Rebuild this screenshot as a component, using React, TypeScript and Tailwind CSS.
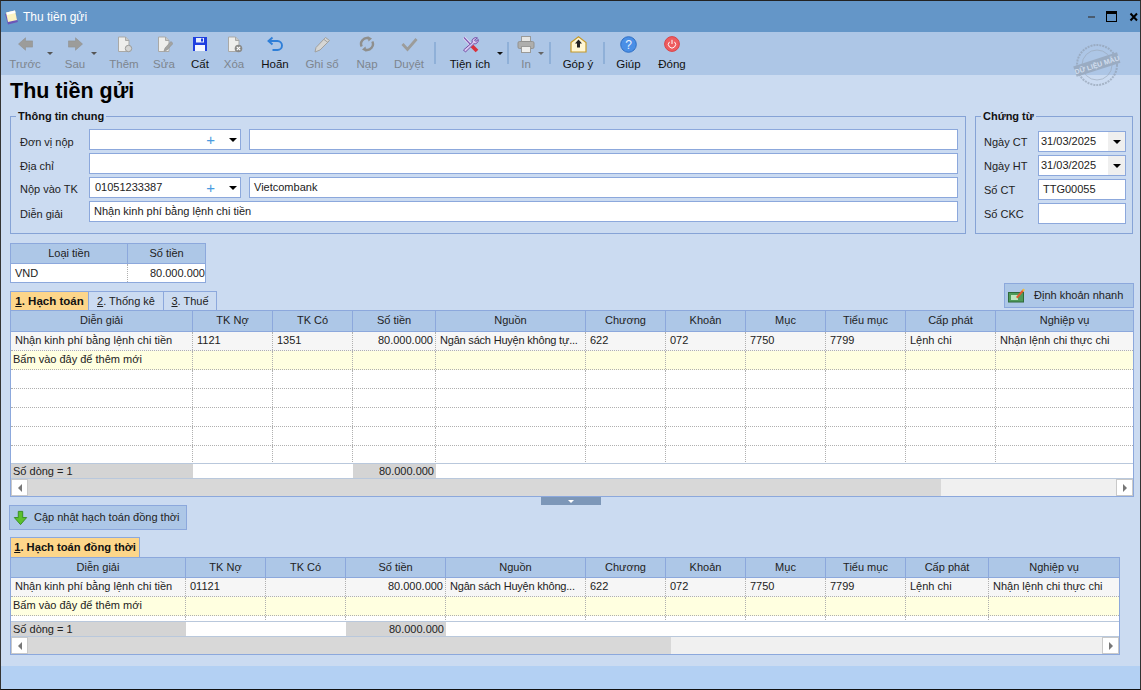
import React from "react";

const Arrow = ({ dir }: { dir: "l" | "r" }) => (
  <svg width="17" height="14" viewBox="0 0 20 18">
    <path d={dir === "l" ? "M1 9 L10 1 V5 H19 V13 H10 V17 Z" : "M19 9 L10 1 V5 H1 V13 H10 V17 Z"} fill="#9c9c9a" stroke="#8f8f8d" strokeWidth="0.7" />
  </svg>
);
const Doc = ({ children }: { children?: React.ReactNode }) => (
  <svg width="17" height="17" viewBox="0 0 17 17">
    <path d="M2.5 1 H9.5 L13 4.5 V15.5 H2.5 Z" fill="#eeeeec" stroke="#a9a9a7" />
    <path d="M9.5 1 V4.5 H13" fill="#c8c8c6" stroke="#a9a9a7" />
    {children}
  </svg>
);
const icons: Record<string, React.ReactNode> = {
  them: <Doc><circle cx="12.5" cy="12.5" r="3.2" fill="#d6d6d4" stroke="#9a9a98" /></Doc>,
  sua: <Doc><path d="M8 15 L9 12 L15 5.5 L17 7.5 L11 14 Z" fill="#a4a4a2" stroke="#8f8f8d" strokeWidth="0.6" /></Doc>,
  cat: (
    <svg width="16" height="16" viewBox="0 0 16 16">
      <path d="M1 1 H15 V15 H1 Z" fill="#1f3fe0" />
      <path d="M4 2 H12 V6.5 H4 Z" fill="#e8eefc" />
      <path d="M3 9 H13 V15 H3 Z" fill="#f4f6ff" />
      <path d="M9 2.5 H11 V5.5 H9 Z" fill="#1f3fe0" />
    </svg>
  ),
  xoa: <Doc><circle cx="12.5" cy="12.5" r="3.8" fill="#8a8a88" /><path d="M10.8 10.8 L14.2 14.2 M14.2 10.8 L10.8 14.2" stroke="#fff" strokeWidth="1.1" /></Doc>,
  hoan: (
    <svg width="16" height="16" viewBox="0 0 16 16" fill="none">
      <path d="M5.5 1.5 L1.5 5 L5.5 8.5" stroke="#2f7fd8" strokeWidth="1.9" />
      <path d="M2 5 H10.5 A4.2 4.2 0 0 1 10.5 14 H5.5" stroke="#2f7fd8" strokeWidth="1.9" />
    </svg>
  ),
  ghi: (
    <svg width="18" height="17" viewBox="0 0 18 17">
      <path d="M2 16 L3 11.5 L12.5 1.5 L16.5 4.5 L7 14 Z" fill="#d6d6d4" stroke="#a0a09e" />
      <path d="M11 3.5 L15 6.5" stroke="#a0a09e" />
    </svg>
  ),
  nap: (
    <svg width="16" height="16" viewBox="0 0 16 16" fill="none">
      <path d="M2.7 10.5 A5.8 5.8 0 0 1 9.5 2.3" stroke="#8f8f8d" strokeWidth="2.4" />
      <path d="M13.3 5.5 A5.8 5.8 0 0 1 6.5 13.7" stroke="#8f8f8d" strokeWidth="2.4" />
      <path d="M8.5 0 L13 2.5 L9.5 5.5 Z M7.5 16 L3 13.5 L6.5 10.5 Z" fill="#8f8f8d" />
    </svg>
  ),
  duyet: (
    <svg width="17" height="15" viewBox="0 0 17 15" fill="none">
      <path d="M1.5 7 L6.5 12.5 L15.5 2" stroke="#9c9c9a" strokeWidth="2.8" />
    </svg>
  ),
  tien: (
    <svg width="17" height="17" viewBox="0 0 17 17" fill="none">
      <path d="M2 1.5 L9 9" stroke="#e6ddf4" strokeWidth="3" />
      <path d="M2 1.5 L9 9" stroke="#7d55b0" strokeWidth="1.1" />
      <path d="M10 10 L15 15" stroke="#d8323c" strokeWidth="3.8" />
      <path d="M15.5 2 A3.8 3.8 0 0 0 10.2 6.5 L1.5 14 L3.5 16 L11.8 7.8 A3.8 3.8 0 0 0 16.3 3.5 L13.8 5.5 L12.5 4 Z" fill="#d9c9ef" stroke="#6b3f9e" strokeWidth="0.9" />
    </svg>
  ),
  in: (
    <svg width="18" height="17" viewBox="0 0 18 17">
      <rect x="4.5" y="0.5" width="9" height="5" fill="#e6e6e4" stroke="#9a9a98" />
      <rect x="1" y="5.5" width="16" height="7" rx="1.5" fill="#aeaeac" stroke="#929290" />
      <rect x="4.5" y="10.5" width="9" height="6" fill="#eeeeec" stroke="#9a9a98" />
    </svg>
  ),
  gop: (
    <svg width="17" height="17" viewBox="0 0 17 17">
      <path d="M1 6.5 L8.5 0.8 L16 6.5 V16 H1 Z" fill="#fff6d4" stroke="#c59a2a" strokeWidth="1.2" />
      <path d="M8.5 3.5 L12 7.5 H10 V11.5 H7 V7.5 H5 Z" fill="#222" />
    </svg>
  ),
  giup: (
    <svg width="17" height="17" viewBox="0 0 17 17">
      <circle cx="8.5" cy="8.5" r="7.8" fill="#4a8fe6" stroke="#2f6fc4" />
      <text x="8.5" y="13" textAnchor="middle" fontSize="12" fill="#e8f2ff" fontFamily="Liberation Sans, sans-serif">?</text>
    </svg>
  ),
  dong: (
    <svg width="16" height="16" viewBox="0 0 16 16" fill="none">
      <circle cx="8" cy="8" r="7.4" fill="#ee5b5f" stroke="#d84449" />
      <path d="M5.5 5.8 A3.6 3.6 0 1 0 10.5 5.8" stroke="#fff" strokeWidth="1" />
      <path d="M8 3.8 V8" stroke="#fff" strokeWidth="1" />
    </svg>
  ),
};

const Caret = ({ c = "#555" }: { c?: string }) => (
  <span className="w-0 h-0 border-x-[3px] border-x-transparent border-t-[3px] block" style={{ borderTopColor: c }} />
);

type Tool = { k: string; label: string; w: string; off?: boolean };

const ToolBtn = ({ t, caret }: { t: Tool; caret?: React.ReactNode }) => (
  <div className={`relative flex flex-col items-center shrink-0 h-[43px] pt-[2px] ${t.w}`}>
    <div className="h-[20px] flex items-center justify-center">{t.k === "l" || t.k === "r" ? <Arrow dir={t.k} /> : icons[t.k]}</div>
    <span className={`mt-[3px] text-[11.5px] leading-[15px] whitespace-nowrap ${t.off ? "text-[#7d858e]" : "text-[#111]"}`}>{t.label}</span>
    {caret}
  </div>
);
const Sep = () => <div className="w-[2px] h-[22px] mt-[10px] bg-[#8fb0d8] shrink-0" />;

const Input = ({ w, h = "h-[21px]", children }: { w: string; h?: string; children?: React.ReactNode }) => (
  <div className={`bg-white border border-[#8ca8dc] px-[4px] flex items-center text-[11px] text-[#222] shrink-0 ${w} ${h}`}>{children}</div>
);
const Combo = ({ text }: { text?: string }) => (
  <div className="w-[152px] h-[21px] bg-white border border-[#8ca8dc] flex items-center text-[11px] text-[#222] shrink-0 pl-[5px]">
    <span className="flex-1">{text}</span>
    <span className="text-[#4a9be0] text-[15px] leading-none mr-[14px] font-normal">+</span>
    <span className="mr-[3px]"><span className="block w-0 h-0 border-x-[4px] border-x-transparent border-t-[4px] border-t-black" /></span>
  </div>
);
const Label = ({ children, w }: { children: React.ReactNode; w: string }) => (
  <span className={`text-[11px] leading-[14px] text-[#222] shrink-0 ${w}`}>{children}</span>
);
const DateBox = ({ v }: { v: string }) => (
  <div className="w-[88px] h-[21px] bg-white border border-[#8ca8dc] flex items-center text-[11px] text-[#222] shrink-0 pl-[2px]">
    <span className="flex-1">{v}</span>
    <span className="w-[17px] h-full bg-[#efefef] flex items-center justify-center">
      <span className="block w-0 h-0 border-x-[4px] border-x-transparent border-t-[4px] border-t-black" />
    </span>
  </div>
);

const Group = ({ title, w, children }: { title: string; w: string; children: React.ReactNode }) => (
  <div className={`relative h-[118px] border border-[#86a3d6] shrink-0 ${w}`}>
    <span className="absolute -top-[8px] left-[5px] px-[2px] bg-[#cbdbf1] text-[11px] leading-[14px] font-bold text-[#111]">{title}</span>
    {children}
  </div>
);

const cellBase = "pl-[4px] pr-[2px] whitespace-nowrap overflow-hidden text-[11px] leading-[17px]";

const colsA = ["Diễn giải", "TK Nợ", "TK Có", "Số tiền", "Nguồn", "Chương", "Khoản", "Mục", "Tiểu mục", "Cấp phát", "Nghiệp vụ"];
const rightCol = 3;

const HeaderRow = ({ tpl, h }: { tpl: string; h: string }) => (
  <div className={`grid ${tpl} ${h} bg-[#adc7e7] border-b border-[#8ca8dc]`}>
    {colsA.map((c, i) => (
      <div key={i} className={`text-center text-[11px] leading-[19px] text-[#222] ${i < 10 ? "border-r border-[#8ca8dc]" : ""}`}>{c}</div>
    ))}
  </div>
);

const Row = ({ tpl, vals, bg, add }: { tpl: string; vals?: string[]; bg: string; add?: boolean }) => (
  <div className={`grid ${tpl} h-[19px] ${bg} border-b border-dotted border-[#b0b0b0]`}>
    {colsA.map((_, i) => (
      <div key={i} className={`${cellBase} ${i === rightCol ? "text-right" : ""} ${i === 4 ? "tracking-[-0.2px]" : ""} ${add && i === 0 ? "!pl-[2px]" : ""} text-[#222] ${i < 10 ? "border-r border-dotted border-[#b0b0b0]" : ""}`}>
        {vals?.[i] ?? ""}
      </div>
    ))}
  </div>
);

const Foot = ({ tpl }: { tpl: string }) => (
  <div className={`grid ${tpl} h-[16px] bg-white border-y border-[#b9c8dc]`}>
    <div className="bg-[#d4d4d4] text-[11px] leading-[14px] px-[2px] text-[#222] whitespace-nowrap">Số dòng = 1</div>
    <div />
    <div />
    <div className="bg-[#d4d4d4] text-[11px] leading-[14px] text-right pr-[2px] text-[#222]">80.000.000</div>
  </div>
);

const Scroll = ({ thumb }: { thumb: string }) => (
  <div className="flex h-[17px] bg-[#f0f0f0]">
    <div className="w-[17px] bg-white border border-[#c9c9c9] flex items-center justify-center shrink-0">
      <span className="block w-0 h-0 border-y-[4px] border-y-transparent border-r-[4px] border-r-[#777]" />
    </div>
    <div className={`bg-[#d8d8d8] shrink-0 ${thumb}`} />
    <div className="flex-1" />
    <div className="w-[17px] bg-white border border-[#c9c9c9] flex items-center justify-center shrink-0">
      <span className="block w-0 h-0 border-y-[4px] border-y-transparent border-l-[4px] border-l-[#777]" />
    </div>
  </div>
);

const tplA = "grid-cols-[182px_80px_80px_83px_150px_80px_80px_80px_80px_90px_1fr]";
const tplB = "grid-cols-[175px_80px_80px_100px_140px_80px_80px_80px_80px_83px_1fr]";

const rowA = ["Nhận kinh phí bằng lệnh chi tiền", "1121", "1351", "80.000.000", "Ngân sách Huyện không tự...", "622", "072", "7750", "7799", "Lệnh chi", "Nhận lệnh chi thực chi"];
const rowB = ["Nhận kinh phí bằng lệnh chi tiền", "01121", "", "80.000.000", "Ngân sách Huyện không...", "622", "072", "7750", "7799", "Lệnh chi", "Nhận lệnh chi thực chi"];
const addNew = ["Bấm vào đây để thêm mới"];

const tools2: Tool[] = [
  { k: "them", label: "Thêm", w: "w-[40px]", off: true },
  { k: "sua", label: "Sửa", w: "w-[40px]", off: true },
  { k: "cat", label: "Cất", w: "w-[32px]" },
  { k: "xoa", label: "Xóa", w: "w-[36px]", off: true },
  { k: "hoan", label: "Hoãn", w: "w-[46px]" },
  { k: "ghi", label: "Ghi sổ", w: "w-[48px]", off: true },
  { k: "nap", label: "Nạp", w: "w-[42px]", off: true },
  { k: "duyet", label: "Duyệt", w: "w-[42px]", off: true },
];

export default function App() {
  return (
    <div className="w-[1141px] h-[690px] overflow-hidden flex flex-col border-x border-[#333] border-t border-t-[#222] border-b border-b-[#111] bg-[#cbdbf1] font-['Liberation_Sans','Noto_Sans',sans-serif]">
      {/* title */}
      <div className="h-[31px] bg-[#6496c8] flex items-center shrink-0">
        <svg className="ml-[3px]" width="15" height="16" viewBox="0 0 15 16">
          <path d="M1 5 L10 3 L14 13 L4 15.5 Z" fill="#6b56b8" />
          <path d="M2 3.5 L11 1.5 L13 11 L4 13 Z" fill="#fbf3c2" />
          <path d="M2.5 3.5 L11 1.5 L11.5 4 L3 6 Z" fill="#fff" />
        </svg>
        <span className="ml-[4px] text-[12px] text-white flex-1">Thu tiền gửi</span>
        <span className="w-[7px] h-[2px] bg-[#4a5c70] mr-[11px] mt-[1px]" />
        <span className="w-[11px] h-[11px] border border-black border-t-[3px] mr-[12px]" />
        <svg className="mr-[1px]" width="10" height="10" viewBox="0 0 10 10"><path d="M1.5 1.5 L8 8.5 M8 1.5 L1.5 8.5" stroke="#000" strokeWidth="2" /></svg>
      </div>
      {/* toolbar */}
      <div className="relative h-[43px] bg-[#adc6e6] flex shrink-0 pl-[1px]">
        <ToolBtn t={{ k: "l", label: "Trước", w: "w-[46px]", off: true }} caret={<span className="absolute right-[-5px] top-[20px]"><Caret /></span>} />
        <div className="w-[4px] shrink-0" />
        <ToolBtn t={{ k: "r", label: "Sau", w: "w-[46px]", off: true }} caret={<span className="absolute right-[1px] top-[20px]"><Caret /></span>} />
        <div className="w-[6px] shrink-0" />
        {tools2.map((t) => <ToolBtn key={t.k} t={t} />)}
        <div className="w-[4px] shrink-0" />
        <Sep />
        <ToolBtn t={{ k: "tien", label: "Tiện ích", w: "w-[68px]" }} caret={<span className="absolute right-[1px] top-[20px]"><Caret c="#111" /></span>} />
        <div className="w-[3px] shrink-0" />
        <Sep />
        <ToolBtn t={{ k: "in", label: "In", w: "w-[34px]", off: true }} caret={<span className="absolute right-[-1px] top-[20px]"><Caret c="#666" /></span>} />
        <div className="w-[6px] shrink-0" />
        <Sep />
        <div className="w-[2px] shrink-0" />
        <ToolBtn t={{ k: "gop", label: "Góp ý", w: "w-[50px]" }} />
        <Sep />
        <ToolBtn t={{ k: "giup", label: "Giúp", w: "w-[47px]" }} />
        <ToolBtn t={{ k: "dong", label: "Đóng", w: "w-[40px]" }} />
        {/* stamp */}
        <div className="absolute left-[1072px] top-[9px] opacity-60">
          <svg width="48" height="48" viewBox="0 0 48 48" fill="none">
            <circle cx="24" cy="24" r="20" stroke="#8f9cad" strokeWidth="2" strokeDasharray="2 1" />
            <circle cx="24" cy="24" r="15" stroke="#9aa7b7" strokeWidth="1" />
            <g transform="rotate(-18 24 24)">
              <rect x="1" y="18" width="46" height="11" fill="#8e9bac" />
              <text x="24" y="26.5" textAnchor="middle" fontSize="7" fill="#e8edf4" fontFamily="Liberation Sans, sans-serif" fontWeight="700">DỮ LIỆU MẪU</text>
            </g>
          </svg>
        </div>
      </div>

      {/* body */}
      <div className="flex-1 pl-[9px] relative">
        <h1 className="text-[21.5px] leading-[24px] font-bold text-black mt-[4px]">Thu tiền gửi</h1>
        <div className="flex mt-[13px] mb-[9px]">
          <Group title="Thông tin chung" w="w-[956px]">
            <div className="flex flex-col pt-[12px] pl-[9px] gap-[3px]">
              <div className="flex items-center">
                <Label w="w-[69px] pt-[4px]">Đơn vị nộp</Label>
                <Combo />
                <div className="w-[8px]" />
                <Input w="w-[709px]" />
              </div>
              <div className="flex items-center">
                <Label w="w-[69px] pt-[4px]">Địa chỉ</Label>
                <Input w="w-[869px]" />
              </div>
              <div className="flex items-center">
                <Label w="w-[69px] pt-[3px]">Nộp vào TK</Label>
                <Combo text="01051233387" />
                <div className="w-[8px]" />
                <Input w="w-[709px]">Vietcombank</Input>
              </div>
              <div className="flex items-center">
                <Label w="w-[69px] pt-[4px]">Diễn giải</Label>
                <Input w="w-[869px]">Nhận kinh phí bằng lệnh chi tiền</Input>
              </div>
            </div>
          </Group>
          <div className="w-[9px] shrink-0" />
          <Group title="Chứng từ" w="w-[158px]">
            <div className="flex flex-col pt-[14px] pl-[8px] gap-[3px]">
              <div className="flex items-center"><Label w="w-[54px] pt-[1px]">Ngày CT</Label><DateBox v="31/03/2025" /></div>
              <div className="flex items-center"><Label w="w-[54px] pt-[1px]">Ngày HT</Label><DateBox v="31/03/2025" /></div>
              <div className="flex items-center"><Label w="w-[54px] pt-[1px]">Số CT</Label><Input w="w-[88px]">TTG00055</Input></div>
              <div className="flex items-center"><Label w="w-[54px] pt-[1px]">Số CKC</Label><Input w="w-[88px]" /></div>
            </div>
          </Group>
        </div>

        {/* currency table */}
        <div className="w-[196px] h-[40px] border border-[#8ca8dc]">
          <div className="grid grid-cols-[117px_1fr] h-[20px] bg-[#adc7e7] border-b border-[#8ca8dc]">
            <div className="text-center text-[11px] leading-[19px] text-[#222] border-r border-[#8ca8dc]">Loại tiền</div>
            <div className="text-center text-[11px] leading-[19px] text-[#222]">Số tiền</div>
          </div>
          <div className="grid grid-cols-[117px_1fr] h-[18px] bg-white">
            <div className="text-[11px] leading-[18px] px-[4px] text-[#222] border-r border-dotted border-[#b0b0b0]">VND</div>
            <div className="text-[11px] leading-[18px] text-right text-[#222]">80.000.000</div>
          </div>
        </div>

        {/* tabs + action */}
        <div className="flex items-end w-[1124px] h-[27px]">
          <div className="flex">
            <div className="w-[79px] h-[19px] bg-[#fdd68a] border-t border-x border-[#8ca8dc] text-[11.5px] leading-[18px] font-bold text-center text-[#111]"><u>1</u>. Hạch toán</div>
            <div className="w-[75px] h-[19px] bg-[#cbdbf1] border-t border-r border-[#8ca8dc] text-[11px] leading-[18px] text-center text-[#222]"><u>2</u>. Thống kê</div>
            <div className="w-[53px] h-[19px] bg-[#cbdbf1] border-t border-r border-[#8ca8dc] text-[11px] leading-[18px] text-center text-[#222]"><u>3</u>. Thuế</div>
          </div>
          <div className="flex-1" />
          <div className="w-[130px] h-[25px] mb-[2px] bg-[#adc7e7] border border-[#8ca8dc] flex items-center text-[11px] text-[#222]">
            <svg className="ml-[3px] mr-[9px]" width="17" height="15" viewBox="0 0 17 15">
              <rect x="0.5" y="4.5" width="15" height="9.5" fill="#4f9a5a" stroke="#2f6a3a" />
              <rect x="3" y="7" width="7" height="5" fill="#bfe6c0" />
              <path d="M8 9 L14.5 1.5 L16 3 L9.5 10.5 Z" fill="#e05a30" />
              <path d="M14 2 L15.5 0.5 L17 2 L15.5 3.5 Z" fill="#f0c040" />
            </svg>
            Định khoản nhanh
          </div>
        </div>

        {/* main grid */}
        <div className="w-[1124px] h-[187px] border border-[#8ca8dc] flex flex-col bg-white">
          <HeaderRow tpl={tplA} h="h-[21px]" />
          <Row tpl={tplA} vals={rowA} bg="bg-[#f6f6f6]" />
          <Row tpl={tplA} vals={addNew} bg="bg-[#ffffe0]" add />
          <Row tpl={tplA} bg="bg-white" />
          <Row tpl={tplA} bg="bg-white" />
          <Row tpl={tplA} bg="bg-white" />
          <Row tpl={tplA} bg="bg-white" />
          <div className="flex-1 min-h-0 overflow-hidden"><Row tpl={tplA} bg="bg-white" /></div>
          <Foot tpl={tplA} />
          <Scroll thumb="w-[913px]" />
        </div>

        {/* splitter */}
        <div className="w-[60px] h-[8px] ml-[531px] bg-[#7d97b8] flex items-center justify-center">
          <span className="block w-0 h-0 border-x-[3px] border-x-transparent border-t-[3px] border-t-white" />
        </div>

        <div className="w-[178px] h-[25px] -ml-[1px] bg-[#adc7e7] border border-[#8ca8dc] flex items-center text-[11px] text-[#222] whitespace-nowrap">
          <svg className="ml-[3px] mr-[6px]" width="15" height="16" viewBox="0 0 17 17">
            <path d="M6 1 H11 V8 H15.5 L8.5 16 L1.5 8 H6 Z" fill="#5cc02c" stroke="#2f8a18" />
          </svg>
          Cập nhật hạch toán đồng thời
        </div>

        <div className="w-[130px] h-[20px] mt-[7px] bg-[#fdd68a] border-t border-x border-[#8ca8dc] text-[11.2px] leading-[19px] font-bold text-center text-[#111] whitespace-nowrap"><u>1</u>. Hạch toán đồng thời</div>

        <div className="w-[1110px] h-[98px] border border-[#8ca8dc] flex flex-col bg-white">
          <HeaderRow tpl={tplB} h="h-[20px]" />
          <Row tpl={tplB} vals={rowB} bg="bg-[#f6f6f6]" />
          <Row tpl={tplB} vals={addNew} bg="bg-[#ffffe0]" add />
          <div className="flex-1 min-h-0 overflow-hidden"><Row tpl={tplB} bg="bg-white" /></div>
          <Foot tpl={tplB} />
          <Scroll thumb="w-[643px]" />
        </div>
      </div>
      <div className="h-[23px] bg-[#b3d0f3] shrink-0" />
    </div>
  );
}
